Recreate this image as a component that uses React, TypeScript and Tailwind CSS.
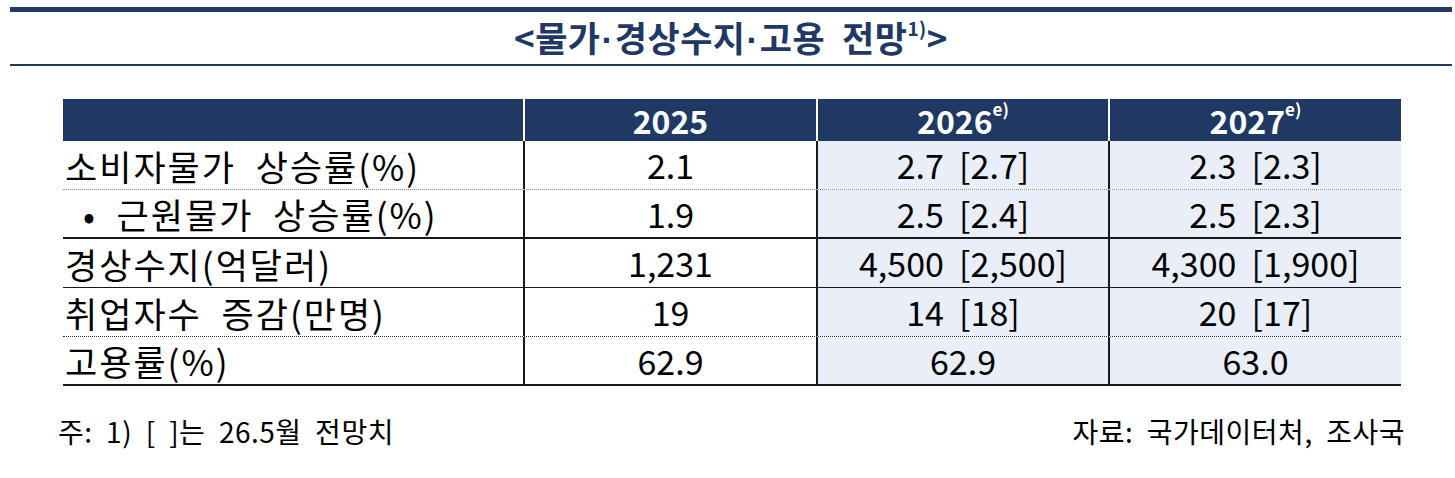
import React from 'react'

const rows = [
  { label: '소비자물가  상승률(%)', v25: '2.1', v26: '2.7  [2.7]', v27: '2.3  [2.3]', line: 'border-b border-dotted border-[#8a8a8a]' },
  { label: '•  근원물가  상승률(%)', v25: '1.9', v26: '2.5  [2.4]', v27: '2.5  [2.3]', line: 'border-b-2 border-solid border-[#1a1a1a]', indent: true },
  { label: '경상수지(억달러)', v25: '1,231', v26: '4,500  [2,500]', v27: '4,300  [1,900]', line: 'border-b border-solid border-[#1a1a1a]' },
  { label: '취업자수  증감(만명)', v25: '19', v26: '14  [18]', v27: '20  [17]', line: 'border-b border-dotted border-[#333333]' },
  { label: '고용률(%)', v25: '62.9', v26: '62.9', v27: '63.0', line: 'border-b-2 border-solid border-[#1a1a1a]' },
]

const Dot = () => <span className="font-['Liberation_Sans',sans-serif] mx-[1px]">·</span>

const App = () => {
  return (
    <div className="w-[1455px] h-[478px] bg-white font-['Noto_Sans_CJK_KR','Noto_Sans',sans-serif] text-black pt-[7px]">
      <div className="ml-[10px] w-[1442px]">
        <div className="h-[5px] bg-[#1f3864]"></div>
        <div className="h-[52px] flex items-center justify-center">
          <h1 className="text-[35px] leading-none font-bold text-[#1f3864] whitespace-pre tracking-[0.5px]">
            {'<물가'}<Dot />{'경상수지'}<Dot />{'고용  전망'}
            <sup className="text-[19px] relative -top-[16px]">1)</sup>
            {'>'}
          </h1>
        </div>
        <div className="h-[2px] bg-[#1f3864]"></div>
      </div>

      <div className="ml-[63px] w-[1338px] mt-[33px]">
        <div className="grid grid-cols-[460px_293px_292px_293px] h-[42px] bg-[#1f3864] text-white text-[32px] font-bold leading-none">
          <div></div>
          <div className="border-l-2 border-white flex items-center justify-center">2025</div>
          <div className="border-l-2 border-white flex items-center justify-center">
            2026<sup className="text-[17px] relative -top-[11px]">e)</sup>
          </div>
          <div className="border-l-2 border-white flex items-center justify-center">
            2027<sup className="text-[17px] relative -top-[11px]">e)</sup>
          </div>
        </div>
        {rows.map((r, key) => (
          <div key={key} className={`grid grid-cols-[460px_293px_292px_293px] h-[49px] text-[34px] leading-none ${r.line}`}>
            <div className={`flex items-center whitespace-pre text-[35px] tracking-[2px] ${r.indent ? 'pl-[20px]' : 'pl-[2px]'}`}>{r.label}</div>
            <div className="border-l-2 border-[#1a1a1a] flex items-center justify-center whitespace-pre">{r.v25}</div>
            <div className="border-l-2 border-[#1a1a1a] bg-[#e9eef8] flex items-center justify-center whitespace-pre">{r.v26}</div>
            <div className="border-l-2 border-[#1a1a1a] bg-[#e9eef8] flex items-center justify-center whitespace-pre">{r.v27}</div>
          </div>
        ))}
      </div>

      <div className="flex justify-between pl-[58px] pr-[50px] mt-[31px] text-[28px] tracking-[0.5px] leading-none whitespace-pre">
        <span>{'주:  1)  [  ]는  26.5월  전망치'}</span>
        <span>{'자료:  국가데이터처,  조사국'}</span>
      </div>
    </div>
  )
}

export default App
